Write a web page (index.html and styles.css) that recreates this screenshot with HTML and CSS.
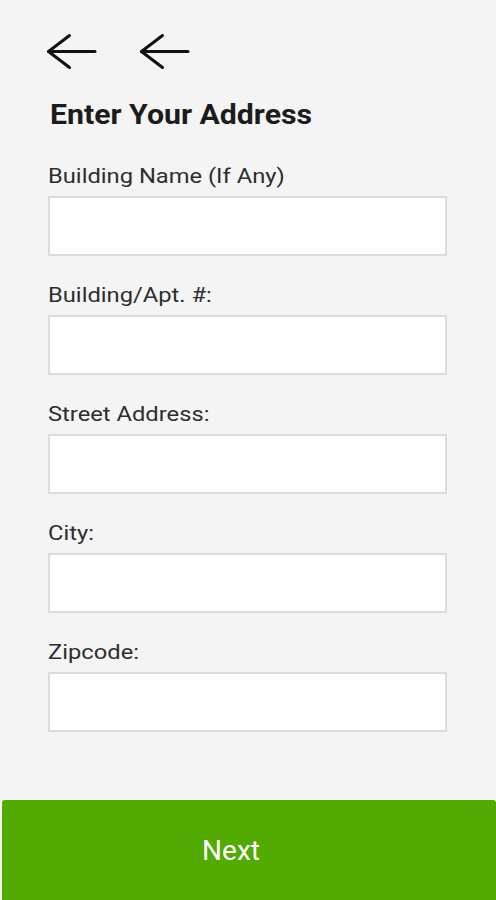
FILE: index.html
```html
<!DOCTYPE html>
<html lang="en">
<head>
  <meta charset="UTF-8">
  <title>Enter Your Address</title>
  <link rel="stylesheet" href="styles.css">
</head>
<body>

  <div class="page">
    <div class="top-bar">
      <svg class="back-icon" width="52" height="40" viewBox="0 0 52 40">
        <polyline points="23.5,3.5 2.5,19.5 23.5,35.5" />
        <line x1="2.5" y1="19.5" x2="49" y2="19.5" />
      </svg>
      <svg class="back-icon" width="52" height="40" viewBox="0 0 52 40">
        <polyline points="23.5,3.5 2.5,19.5 23.5,35.5" />
        <line x1="2.5" y1="19.5" x2="49" y2="19.5" />
      </svg>
    </div>

    <h1>Enter Your Address</h1>

    <form id="address-form">
      <div class="form-group">
        <label for="building-name">Building Name (If Any)</label>
        <input type="text" id="building-name">
      </div>

      <div class="form-group">
        <label for="apt">Building/Apt. #:</label>
        <input type="text" id="apt">
      </div>

      <div class="form-group">
        <label for="street">Street Address:</label>
        <input type="text" id="street">
      </div>

      <div class="form-group">
        <label for="city">City:</label>
        <input type="text" id="city">
      </div>

      <div class="form-group">
        <label for="zipcode">Zipcode:</label>
        <input type="text" id="zipcode">
      </div>
    </form>
  </div>

  <button type="submit" form="address-form" class="btn-next">Next</button>

</body>
</html>
```

FILE: styles.css
```css
body {
  margin: 0;
  font-family: Roboto, "Liberation Sans", sans-serif;
  background-color: #f4f4f4;
  height: 900px;
  overflow: hidden;
}

.page {
  padding: 32px 49px 0 48px;
}

.top-bar {
  display: flex;
  gap: 41px;
  margin-left: -2px;
  height: 40px;
}

.back-icon polyline,
.back-icon line {
  fill: none;
  stroke: #111;
  stroke-width: 3;
  stroke-linecap: round;
  stroke-linejoin: round;
}

/* the screenshot text is a bit wider than plain Roboto */
h1 {
  margin: 27px 0 33px 2px;
  font-size: 27px;
  line-height: 32px;
  font-weight: bold;
  color: #1c1c1c;
  transform: scaleX(1.12);
  transform-origin: left center;
}

.form-group {
  margin-bottom: 27px;
}

label {
  display: block;
  font-size: 21px;
  line-height: 24px;
  color: #2e2e2e;
  margin-bottom: 8px;
  transform: scaleX(1.13);
  transform-origin: left center;
}

input {
  display: block;
  width: 100%;
  height: 60px;
  margin: 0;
  padding: 0 10px;
  border: 2px solid #dcdcdc;
  background-color: white;
  box-sizing: border-box;
  font-size: 20px;
}

.btn-next {
  display: block;
  position: absolute;
  top: 800px;
  left: 2px;
  width: 494px;
  height: 100px;
  padding: 0 36px 0 0;
  border: none;
  border-radius: 3px 3px 0 0;
  background-color: #52aa02;
  color: white;
  font-family: Roboto, "Liberation Sans", sans-serif;
  font-size: 28px;
  cursor: pointer;
}
```
